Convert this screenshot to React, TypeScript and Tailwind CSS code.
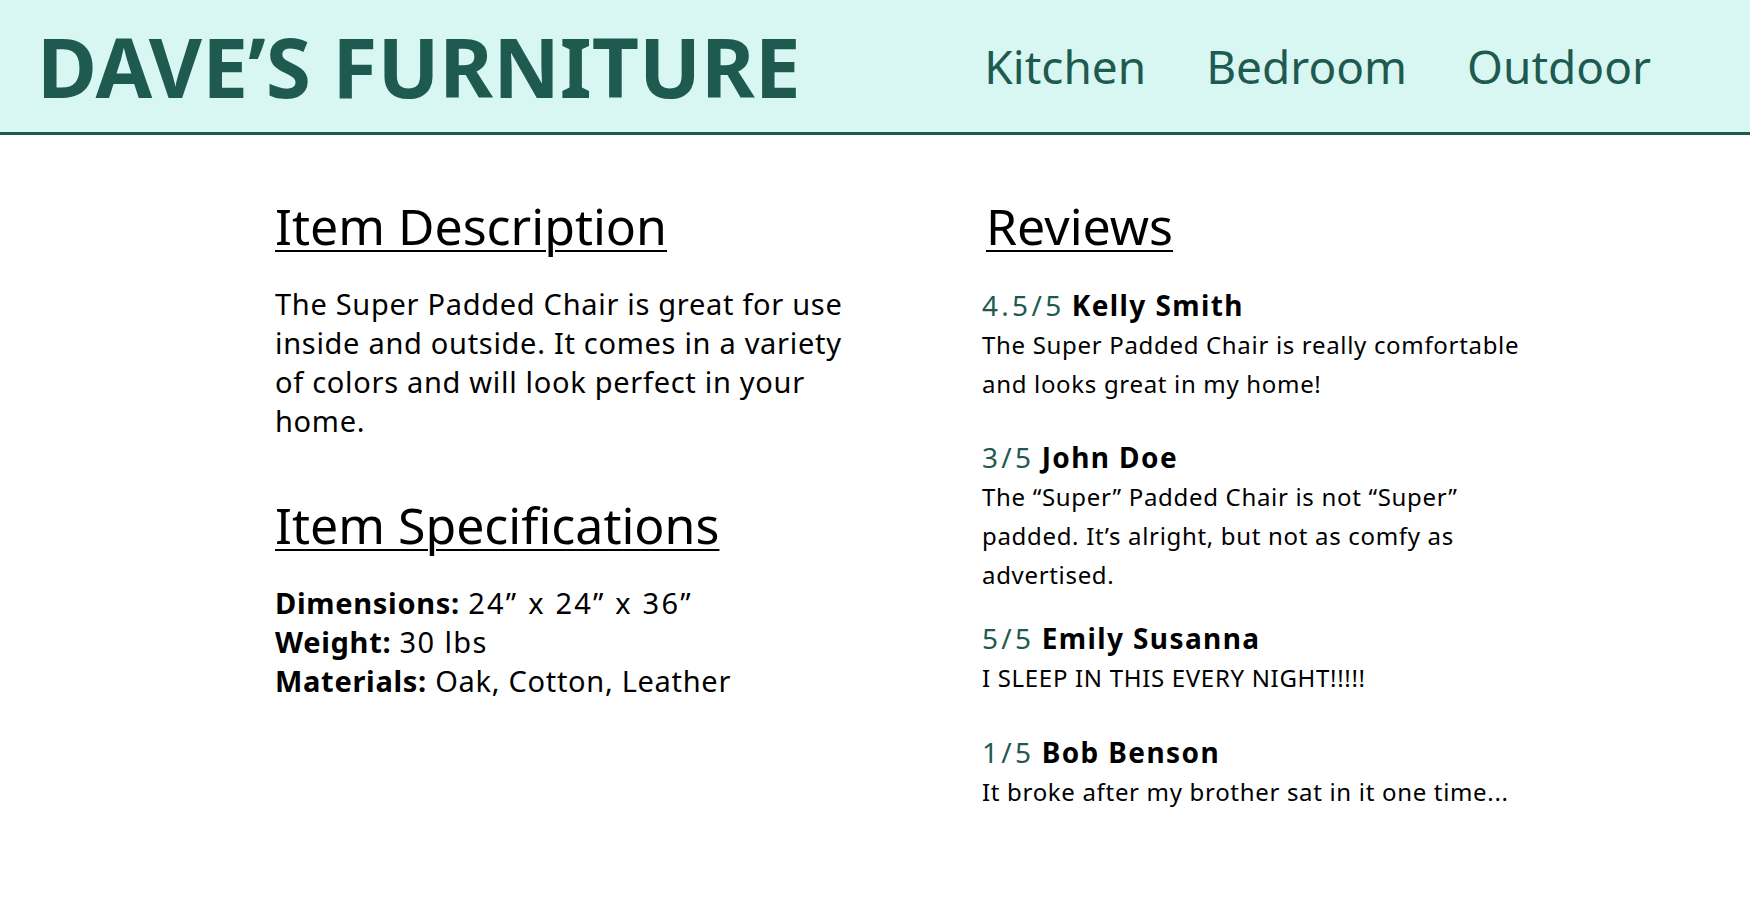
import React from "react";

const reviews = [
  { rating: "4.5/5", name: "Kelly Smith", text: "The Super Padded Chair is really comfortable and looks great in my home!", mb: "mb-[34px]" },
  { rating: "3/5", name: "John Doe", text: "The “Super” Padded Chair is not “Super” padded. It’s alright, but not as comfy as advertised.", mb: "mb-[24px]" },
  { rating: "5/5", name: "Emily Susanna", text: "I SLEEP IN THIS EVERY NIGHT!!!!!", mb: "mb-[35px]" },
  { rating: "1/5", name: "Bob Benson", text: "It broke after my brother sat in it one time...", mb: "mb-0" },
];

const heading = "text-[50px] leading-[64px] underline underline-offset-[5px] decoration-2";

export default function App() {
  return (
    <div className="min-h-screen bg-white text-black font-['Noto_Sans',sans-serif]">
      <header className="h-[135px] bg-[#d8f7f2] border-b-[3px] border-[#1f5a50] flex items-center justify-between pl-[37px] pr-[99px]">
        <h1 className="text-[82px] font-bold text-[#1f5a50] leading-none">DAVE’S FURNITURE</h1>
        <nav className="flex items-center text-[46px] text-[#1f5a50]">
          <a className="mr-[60px]">Kitchen</a>
          <a className="mr-[60px]">Bedroom</a>
          <a>Outdoor</a>
        </nav>
      </header>

      <main className="grid grid-cols-[707px_550px] pl-[275px] pt-[59px]">
        <section>
          <h2 className={heading}>Item Description</h2>
          <p className="mt-[26px] w-[590px] text-[29px] leading-[39px] tracking-[0.7px]">
            The Super Padded Chair is great for use inside and outside. It comes in a variety of colors and will look perfect in your home.
          </p>
          <h2 className={`mt-[53px] ${heading}`}>Item Specifications</h2>
          <div className="mt-[26px] text-[29px] leading-[39px] tracking-[0.7px]">
            <p><b>Dimensions:</b> <span className="tracking-[2.2px]">24” x 24” x 36”</span></p>
            <p><b>Weight:</b> <span className="tracking-[1.4px]">30 lbs</span></p>
            <p><b>Materials:</b> Oak, Cotton, Leather</p>
          </div>
        </section>

        <section>
          <h2 className={`ml-[4px] ${heading}`}>Reviews</h2>
          <div className="mt-[27px]">
            {reviews.map((r) => (
              <div key={r.name} className={r.mb}>
                <div className="text-[28px] leading-[40px]">
                  <span className="text-[#1f5a50] tracking-[3.3px]">{r.rating}</span>{" "}
                  <b className="tracking-[1.4px]">{r.name}</b>
                </div>
                <p className="text-[24px] leading-[39px] tracking-[0.68px]">{r.text}</p>
              </div>
            ))}
          </div>
        </section>
      </main>
    </div>
  );
}
